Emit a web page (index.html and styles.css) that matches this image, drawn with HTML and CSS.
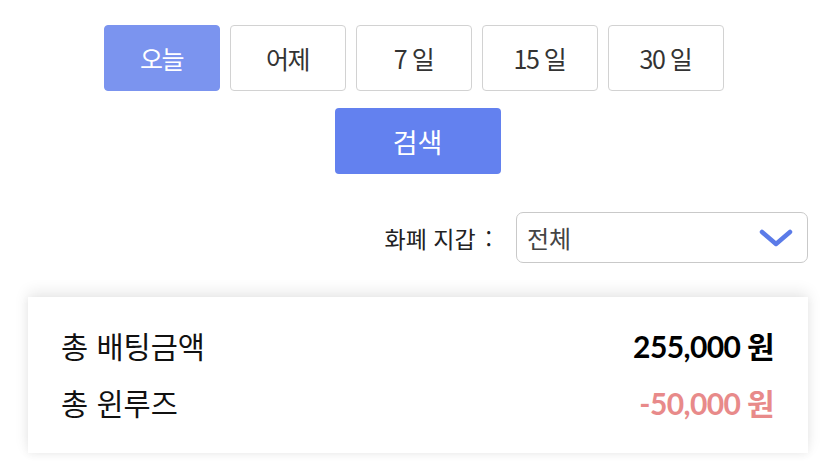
FILE: index.html
```html
<!DOCTYPE html>
<html lang="ko">
<head>
<meta charset="utf-8">
<link rel="stylesheet" href="styles.css">
</head>
<body>
<div class="page">
  <div class="periods">
    <button class="period active">오늘</button>
    <button class="period">어제</button>
    <button class="period">7 일</button>
    <button class="period">15 일</button>
    <button class="period">30 일</button>
  </div>
  <div class="search-row">
    <button class="search">검색</button>
  </div>
  <div class="filter">
    <span class="filter-label">화폐 지갑<span class="colon">:</span></span>
    <div class="select">
      <span class="select-value">전체</span>
      <svg class="chevron" width="34" height="20" viewBox="0 0 34 20"><path d="M3 4 L17 16 L31 4" fill="none" stroke="#5b7be8" stroke-width="4.5" stroke-linecap="round" stroke-linejoin="round"/></svg>
    </div>
  </div>
  <div class="card">
    <div class="row">
      <span class="label">총 배팅금액</span>
      <span class="value">255,000 원</span>
    </div>
    <div class="row">
      <span class="label">총 윈루즈</span>
      <span class="value neg">-50,000 원</span>
    </div>
  </div>
</div>
</body>
</html>
```
FILE: styles.css
```css
* { box-sizing: border-box; }
html, body {
  margin: 0;
  padding: 0;
  background: #ffffff;
  font-family: "Noto Sans CJK KR", "Noto Sans", sans-serif;
}
.page {
  width: 835px;
  height: 467px;
  overflow: hidden;
}
.periods {
  display: flex;
  justify-content: center;
  gap: 10px;
  padding-top: 25px;
  padding-right: 8px;
}
.period {
  width: 116px;
  height: 66px;
  border: 1px solid #d2d2d2;
  border-radius: 4px;
  background: #fff;
  color: #333;
  font-family: "Noto Sans CJK KR", sans-serif;
  font-size: 25px;
  letter-spacing: -1.5px;
  padding: 0;
}
.period.active {
  background: #7b94ef;
  border-color: #7b94ef;
  color: #fff;
}
.search-row {
  display: flex;
  justify-content: center;
  margin-top: 17px;
}
.search {
  width: 166px;
  height: 66px;
  border: none;
  border-radius: 4px;
  background: #6381ef;
  color: #fff;
  font-family: "Noto Sans CJK KR", sans-serif;
  font-size: 27px;
  padding: 0;
}
.filter {
  display: flex;
  justify-content: flex-end;
  align-items: center;
  gap: 24px;
  margin-top: 38px;
  padding-right: 27px;
}
.filter-label {
  font-size: 23px;
  color: #222;
}
.colon {
  margin-left: 10px;
}
.select {
  width: 292px;
  height: 51px;
  border: 1px solid #c9c9c9;
  border-radius: 7px;
  display: flex;
  align-items: center;
  justify-content: space-between;
  padding: 0 14px 0 10px;
}
.select-value {
  font-size: 24px;
  color: #444;
}
.card {
  margin: 34px 27px 0 28px;
  height: 156px;
  background: #fff;
  box-shadow: 0 -5px 14px rgba(0, 0, 0, 0.09), 0 2px 8px rgba(0, 0, 0, 0.05);
  padding: 28px 34px 0 33px;
  display: flex;
  flex-direction: column;
  gap: 17px;
}
.row {
  height: 40px;
  display: flex;
  justify-content: space-between;
  align-items: center;
}
.label {
  font-size: 29.5px;
  color: #111;
}
.value {
  font-family: Lato, "Noto Sans CJK KR", sans-serif;
  font-weight: 700;
  font-size: 30px;
  color: #000;
  letter-spacing: -0.6px;
}
.value.neg {
  color: #e88a8a;
}
```
